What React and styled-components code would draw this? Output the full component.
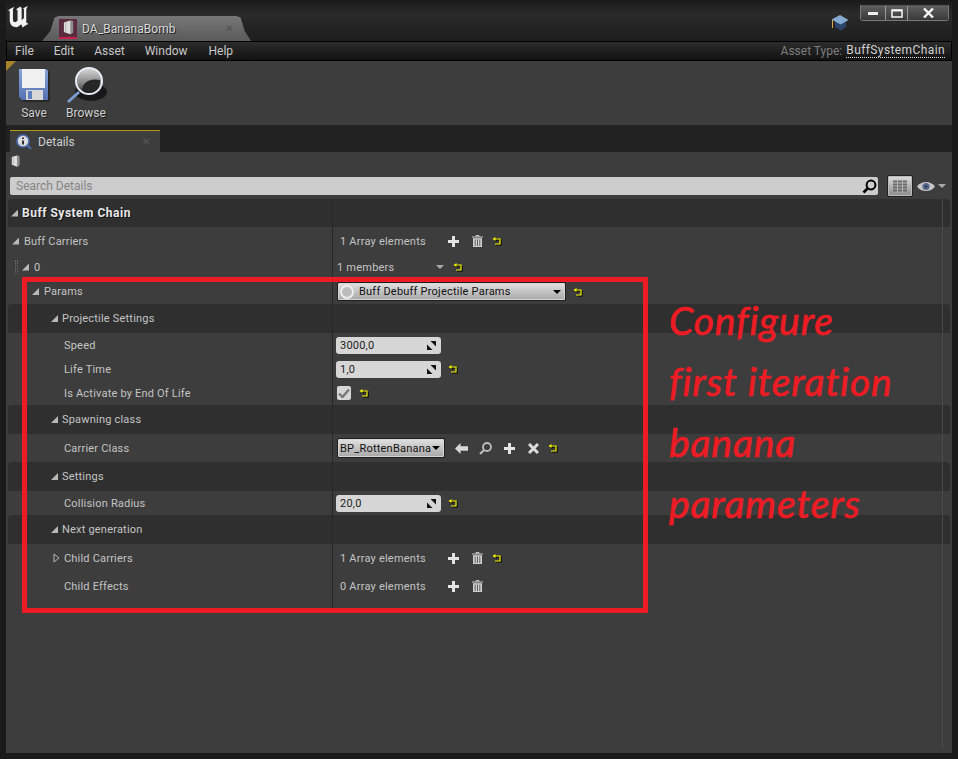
import React from 'react';
import styled, { createGlobalStyle } from 'styled-components';

const GlobalStyle = createGlobalStyle`
  html, body { margin: 0; padding: 0; background: #1a1a1a; }
  * { box-sizing: border-box; }
`;

const Window = styled.div`
  position: relative;
  width: 958px;
  height: 759px;
  overflow: hidden;
  display: flex;
  flex-direction: column;
  padding: 0 6px 6px 6px;
  background: #1a1a1a;
  font-family: Roboto, "Liberation Sans", sans-serif;
  font-size: 11px;
  letter-spacing: 0.22px;
  color: #c4c4c4;
`;

// title bar
const TitleBar = styled.div`
  height: 41px;
  flex: none;
  display: flex;
  align-items: flex-start;
  padding-right: 3px;
  background: linear-gradient(#191919 0, #2b2b2b 14px, #1d1d1d 41px);
`;

const Logo = styled.svg`
  width: 22px;
  height: 22px;
  margin-top: 6px;
  margin-left: 1px;
  flex: none;
`;

const DocTab = styled.div`
  width: 209px;
  height: 25px;
  margin: 16px 0 0 13px;
  padding: 0 18px 0 17px;
  flex: none;
  display: flex;
  align-items: center;
  background: linear-gradient(#777 0, #5a5a5a 100%);
  clip-path: polygon(0 100%, 4% 60%, 6% 6%, 8% 0, 93% 0, 95% 6%, 97% 60%, 100% 100%);
  color: #d8d8d8;
  font-size: 12px;
  letter-spacing: 0.05px;
  text-shadow: 1px 1px 0 #222;
`;

const DocIcon = styled.div`
  width: 18px;
  height: 20px;
  margin-right: 5px;
  display: flex;
  align-items: center;
  justify-content: center;
  background: #5a2b3c;
  border-bottom: 2px solid #c8204a;
`;

const TabClose = styled.span`
  margin-left: auto;
  font-size: 10px;
  text-shadow: none;
  color: ${(p) => p.$color || '#505050'};
`;

const Cap = styled.svg`
  width: 18px;
  height: 17px;
  margin: 14px 11px 0 auto;
  flex: none;
`;

const WinButtons = styled.div`
  display: flex;
  margin-top: 5px;
  flex: none;
  border: 1px solid #777;
  border-top-color: #555;
  border-radius: 0 0 3px 3px;
`;

const WinButton = styled.div`
  width: ${(p) => p.$w}px;
  height: 14px;
  display: flex;
  align-items: center;
  justify-content: center;
  background: linear-gradient(#5e5e5e, #3a3a3a);
  border-right: ${(p) => (p.$last ? 'none' : '1px solid #999')};
`;

// menu
const MenuBar = styled.div`
  height: 20px;
  flex: none;
  display: flex;
  align-items: center;
  padding: 0 6px 0 8px;
  border: 1px solid #000;
  background: linear-gradient(#2c2c2c, #121212);
  font-size: 12px;
  letter-spacing: 0;
  color: #c8c8c8;
`;

const MenuItem = styled.span`
  margin-right: ${(p) => p.$gap}px;
`;

const AssetLabel = styled.span`
  margin-left: auto;
  color: #7d7d7d;
`;

const AssetValue = styled.span`
  margin-left: 4px;
  color: #d0d0d0;
  border-bottom: 1px dotted #ddd;
  line-height: 13px;
  letter-spacing: 0.4px;
`;

// toolbar
const Toolbar = styled.div`
  position: relative;
  height: 64px;
  flex: none;
  display: flex;
  padding: 6px 0 0 11px;
  background: #3d3d3d;
  &::before {
    content: '';
    position: absolute;
    left: 0;
    top: 0;
    width: 10px;
    height: 10px;
    background: #a8842a;
    clip-path: polygon(0 0, 100% 0, 0 100%);
  }
`;

const ToolButton = styled.div`
  width: ${(p) => p.$w}px;
  display: flex;
  flex-direction: column;
  align-items: center;
  font-size: 12px;
  letter-spacing: 0;
  color: #cfcfcf;
  text-shadow: 1px 1px 0 #1c1c1c;
  svg { height: 38px; flex: none; margin-bottom: 1px; }
`;

// details tab
const TabStrip = styled.div`
  height: 27px;
  flex: none;
  display: flex;
  align-items: flex-end;
  padding-left: 4px;
  background: #212121;
`;

const DetailsTab = styled.div`
  width: 150px;
  height: 22px;
  display: flex;
  align-items: center;
  padding: 0 10px 0 6px;
  background: #3d3d3d;
  border-top: 1px solid #b39a12;
  font-size: 12px;
  letter-spacing: 0;
  color: #d0d0d0;
  svg { margin-right: 6px; }
`;

// panel
const Panel = styled.div`
  flex: 1;
  min-height: 0;
  display: flex;
  flex-direction: column;
  background: #3d3d3d;
  padding-bottom: 5px;
`;

const IconRow = styled.div`
  height: 25px;
  flex: none;
  padding: 3px 0 0 5px;
`;

const SearchRow = styled.div`
  height: 18px;
  flex: none;
  display: flex;
  align-items: center;
  padding-left: 4px;
  margin-bottom: 4px;
`;

const SearchBox = styled.div`
  width: 868px;
  height: 18px;
  display: flex;
  align-items: center;
  justify-content: space-between;
  padding: 0 1px 0 6px;
  background: #cdcdcd;
  border-radius: 2px;
  color: #858585;
  font-size: 12px;
  letter-spacing: 0;
`;

const ViewButton = styled.div`
  width: 26px;
  height: 22px;
  margin-left: 9px;
  flex: none;
  display: flex;
  align-items: center;
  justify-content: center;
  background: linear-gradient(#dcdcdc, #8c8c8c);
  border: 1px solid #222;
  border-radius: 2px;
  box-shadow: inset 0 0 0 1px #bbb;
`;

const EyeGroup = styled.div`
  display: flex;
  align-items: center;
  margin-left: 4px;
  gap: 3px;
`;

const List = styled.div`
  position: relative;
  flex: 1;
  min-height: 0;
  margin-left: 2px;
  width: 942px;
  &::after {
    content: '';
    position: absolute;
    left: 934px;
    top: 0;
    bottom: 0;
    width: 1px;
    background: #4a4a4a;
  }
`;

const Row = styled.div`
  height: ${(p) => p.$h}px;
  display: flex;
  background: ${(p) => (p.$dark ? '#2f2f2f' : '#3d3d3d')};
  border-radius: ${(p) => (p.$dark ? '4px 4px 0 0' : '0')};
`;

const NameCell = styled.div`
  width: 324px;
  flex: none;
  display: flex;
  align-items: center;
  padding-left: ${(p) => p.$indent}px;
  font-weight: ${(p) => (p.$bold ? 700 : 400)};
  font-size: ${(p) => (p.$bold ? '12px' : '11px')};
  letter-spacing: ${(p) => (p.$bold ? '0.5px' : '0.2px')};
  color: ${(p) => (p.$bold ? '#e8e8e8' : '#c4c4c4')};
  text-shadow: ${(p) => (p.$bold ? '1px 1px 0 #111' : 'none')};
`;

const ValueCell = styled.div`
  flex: 1;
  display: flex;
  align-items: center;
  padding-left: ${(p) => p.$pad ?? 7}px;
  border-left: 1px solid #272727;
`;

const Caret = styled.span`
  width: 7px;
  height: 7px;
  flex: none;
  margin-right: ${(p) => p.$gap ?? 5}px;
  background: #b8b8b8;
  clip-path: polygon(100% 0, 100% 100%, 0 100%);
`;

const Handle = styled.span`
  width: 3px;
  height: 14px;
  flex: none;
  margin-right: 4px;
  border-left: 1px dotted #6e6e6e;
  border-right: 1px dotted #6e6e6e;
`;

const Count = styled.span`
  width: ${(p) => p.$w}px;
  flex: none;
`;

const Slot = styled.span`
  width: ${(p) => p.$w ?? 24}px;
  flex: none;
  display: flex;
  align-items: center;
  justify-content: center;
`;

const NumberField = styled.div`
  width: 105px;
  height: 17px;
  flex: none;
  display: flex;
  align-items: center;
  justify-content: space-between;
  padding: 0 5px 0 4px;
  background: #d6d6d6;
  border-radius: 3px;
  color: #1c1c1c;
`;

const Check = styled.div`
  width: 14px;
  height: 14px;
  margin-left: 1px;
  flex: none;
  display: flex;
  align-items: center;
  justify-content: center;
  background: #d6d6d6;
  border-radius: 2px;
`;

const Combo = styled.div`
  width: ${(p) => p.$w}px;
  height: ${(p) => p.$h}px;
  margin-right: ${(p) => p.$after ?? 0}px;
  flex: none;
  display: flex;
  align-items: center;
  padding: 0 4px 0 2px;
  background: linear-gradient(#e2e2e2, #a6a6a6);
  border: 1px solid #1d1d1d;
  border-radius: 2px;
  box-shadow: inset 0 0 0 1px #d8d8d8;
  color: #111;
  white-space: nowrap;
`;

const ComboDot = styled.span`
  width: 14px;
  height: 14px;
  margin-right: 5px;
  flex: none;
  border-radius: 50%;
  background: #bcbcbc;
  border: 2px solid #eee;
`;

const ComboArrow = styled.span`
  width: 0;
  height: 0;
  margin-left: auto;
  flex: none;
  border-left: 4px solid transparent;
  border-right: 4px solid transparent;
  border-top: 4px solid #000;
`;

const MemberArrow = styled.span`
  width: 0;
  height: 0;
  flex: none;
  border-left: 4px solid transparent;
  border-right: 4px solid transparent;
  border-top: 4px solid #aaa;
`;

// annotation over the panel
const RedFrame = styled.div`
  position: absolute;
  left: 22px;
  top: 277px;
  width: 626px;
  height: 336px;
  border: 5px solid #ed1c24;
  pointer-events: none;
`;

const Note = styled.div`
  position: absolute;
  left: 669px;
  top: 290px;
  font-family: Lato, "Liberation Sans", sans-serif;
  font-style: italic;
  font-weight: 400;
  font-size: 39px;
  line-height: 61px;
  letter-spacing: 0.9px;
  -webkit-text-stroke: 0.7px #ed1c24;
  color: #ed1c24;
  white-space: nowrap;
`;

// icons
const Reset = () => (
  <svg width="10" height="10" viewBox="0 0 10 10" style={{ filter: 'drop-shadow(1px 1px 0 #000)' }}>
    <path d="M2 3H8V8H3" fill="none" stroke="#f6f600" strokeWidth="1.2" />
    <path d="M3.5 1V5L0.5 3Z" fill="#f6f600" />
  </svg>
);

const Plus = () => (
  <svg width="11" height="11" viewBox="0 0 11 11">
    <path d="M5.5 0V11M0 5.5H11" stroke="#e4e4e4" strokeWidth="3" />
  </svg>
);

const Trash = () => (
  <svg width="11" height="12" viewBox="0 0 11 12">
    <path d="M0 2H11M4 2V0.6H7V2" stroke="#cfcfcf" strokeWidth="1" fill="none" />
    <path d="M1 3.2H10V12H1Z" fill="#cfcfcf" />
    <path d="M3.2 4.5V11M5.5 4.5V11M7.8 4.5V11" stroke="#555" strokeWidth="0.9" />
  </svg>
);

const Back = () => (
  <svg width="13" height="11" viewBox="0 0 13 11">
    <path d="M0 5.5L5.5 0V3.2H13V7.8H5.5V11Z" fill="#d8d8d8" />
  </svg>
);

const Find = () => (
  <svg width="13" height="13" viewBox="0 0 13 13">
    <circle cx="8" cy="5" r="4" fill="none" stroke="#bdbdbd" strokeWidth="1.8" />
    <path d="M5 8L1 12" stroke="#bdbdbd" strokeWidth="2.2" />
  </svg>
);

const Cross = () => (
  <svg width="11" height="11" viewBox="0 0 11 11">
    <path d="M1 1L10 10M10 1L1 10" stroke="#dcdcdc" strokeWidth="3" />
  </svg>
);

const Spin = () => (
  <svg width="9" height="9" viewBox="0 0 9 9">
    <path d="M3.5 0H9V5.5Z M0 3.5L5.5 9H0Z" fill="#111" />
  </svg>
);

const Book = ({ size = 12 }) => (
  <svg width={size} height={size * 1.35} viewBox="0 0 12 16">
    <path d="M1 2.5L8 0.5L11 1.5V13.5L8 15.5L1 13Z" fill="#dedede" />
    <path d="M8 0.5V15.5L11 13.5V1.5Z" fill="#8d8d8d" />
    <path d="M3 3V12.5" stroke="#aaa" strokeWidth="1" />
  </svg>
);

const Collapsed = () => (
  <svg width="7" height="10" viewBox="0 0 7 10" style={{ marginRight: 4, marginLeft: 1 }}>
    <path d="M1 1L6 5L1 9Z" fill="none" stroke="#b8b8b8" strokeWidth="1" />
  </svg>
);

const App = () => (
  <Window>
    <GlobalStyle />

    <TitleBar>
      <Logo viewBox="0 0 24 24">
        <path
          d="M1 5C3 3 5 2 8 1L6.5 3.5V15C6.5 17 8 18 9.5 17.5L11.5 16V5L10 3.5L14.5 0.5L16 2.5V15.5L18.5 13V3.5L17.5 2.5L23 0C21.5 2 21 3.5 21 5.5V18L23.5 19.5C20.5 20.5 18.5 22 17 23.5L15.5 20L11.5 23C7 23.5 3 21 3 15.5V6.5C3 5.5 2.5 5 1 5Z"
          fill="#f2f2f2"
        />
      </Logo>
      <DocTab>
        <DocIcon>
          <Book size={11} />
        </DocIcon>
        DA_BananaBomb
        <TabClose>✕</TabClose>
      </DocTab>
      <Cap viewBox="0 0 18 17">
        <path d="M4 8V13L10 16.5L15 13V8Z" fill="#2c4468" />
        <path d="M0.5 5.5L9 1L17.5 6L9.5 10.5Z" fill="#86aad2" />
        <path d="M1.5 6V14" stroke="#d8a84a" strokeWidth="1" />
      </Cap>
      <WinButtons>
        <WinButton $w={25}>
          <svg width="10" height="4"><rect width="10" height="3" y="1" fill="#eee" /></svg>
        </WinButton>
        <WinButton $w={22}>
          <svg width="12" height="9"><rect x="1" y="1" width="10" height="7" fill="none" stroke="#eee" strokeWidth="1.6" /><rect x="1" y="0.5" width="10" height="2" fill="#eee" /></svg>
        </WinButton>
        <WinButton $w={40} $last>
          <svg width="11" height="10" viewBox="0 0 11 10"><path d="M1 0.5L10 9.5M10 0.5L1 9.5" stroke="#f2f2f2" strokeWidth="2.4" /></svg>
        </WinButton>
      </WinButtons>
    </TitleBar>

    <MenuBar>
      <MenuItem $gap={20}>File</MenuItem>
      <MenuItem $gap={20}>Edit</MenuItem>
      <MenuItem $gap={20}>Asset</MenuItem>
      <MenuItem $gap={21}>Window</MenuItem>
      <MenuItem $gap={0}>Help</MenuItem>
      <AssetLabel>Asset Type:</AssetLabel>
      <AssetValue>BuffSystemChain</AssetValue>
    </MenuBar>

    <Toolbar>
      <ToolButton $w={34}>
        <svg width="32" height="38" viewBox="0 0 32 36">
          <defs>
            <linearGradient id="saveBody" x1="0" y1="0" x2="0" y2="1">
              <stop offset="0" stopColor="#8aa4dc" />
              <stop offset="1" stopColor="#5470b0" />
            </linearGradient>
          </defs>
          <path d="M1 2H30L32 4V33H5L1 30Z" fill="#000" opacity="0.35" transform="translate(1 1)" />
          <path d="M1 1H28L30 3V32H4L1 29Z" fill="url(#saveBody)" />
          <rect x="4" y="1" width="23" height="19" fill="#f0f0f0" />
          <rect x="8" y="22" width="17" height="10" fill="#d8d8d8" />
          <rect x="10" y="23" width="4" height="8" fill="#5f80c0" />
        </svg>
        Save
      </ToolButton>
      <ToolButton $w={70}>
        <svg width="42" height="38" viewBox="0 0 42 38">
          <defs>
            <linearGradient id="lens" x1="0" y1="0" x2="0" y2="1">
              <stop offset="0" stopColor="#d8d8d8" />
              <stop offset="0.55" stopColor="#8a8a8a" />
              <stop offset="1" stopColor="#2b2b2b" />
            </linearGradient>
          </defs>
          <ellipse cx="26" cy="25" rx="16" ry="9" fill="#000" opacity="0.6" />
          <path d="M14 25L3 35" stroke="#7d9bd4" strokeWidth="3" />
          <circle cx="24" cy="14" r="13" fill="url(#lens)" stroke="#e6ecf6" strokeWidth="2" />
          <path d="M17 23C18 15 25 11 35 13C36 20 31 26 24 26C21 26 19 25 17 23Z" fill="#262626" />
        </svg>
        Browse
      </ToolButton>
    </Toolbar>

    <TabStrip>
      <DetailsTab>
        <svg width="16" height="16" viewBox="0 0 16 16">
          <path d="M10 10L15 15" stroke="#4a6cb0" strokeWidth="2" />
          <circle cx="7" cy="7" r="6" fill="#dcdcdc" stroke="#4a6cb0" strokeWidth="1.6" />
          <path d="M7 3.5V5M7 6.5V10.5" stroke="#333" strokeWidth="2" />
        </svg>
        Details
        <TabClose $color="#5a5a5a">✕</TabClose>
      </DetailsTab>
    </TabStrip>

    <Panel>
      <IconRow>
        <Book size={9} />
      </IconRow>
      <SearchRow>
        <SearchBox>
          Search Details
          <svg width="15" height="15" viewBox="0 0 15 15">
            <circle cx="9" cy="6" r="4.4" fill="none" stroke="#000" strokeWidth="2" />
            <path d="M5.5 9.5L1.5 13.5" stroke="#000" strokeWidth="2.6" />
          </svg>
        </SearchBox>
        <ViewButton>
          <svg width="14" height="13" viewBox="0 0 14 13">
            <path d="M0 1.5H14M0 4.5H14M0 7.5H14M0 10.5H14" stroke="#6a6a6a" strokeWidth="2" />
            <path d="M4.5 0V13M9.5 0V13" stroke="#b4b4b4" strokeWidth="1" />
          </svg>
        </ViewButton>
        <EyeGroup>
          <svg width="18" height="11" viewBox="0 0 18 11">
            <path d="M0 5.5C4 -0.5 14 -0.5 18 5.5C14 11.5 4 11.5 0 5.5Z" fill="#c6c6c6" />
            <circle cx="9" cy="5.5" r="3.6" fill="#56678c" />
            <circle cx="9" cy="5.5" r="1.3" fill="#2e3a55" />
          </svg>
          <MemberArrow />
        </EyeGroup>
      </SearchRow>

      <List>
        <Row $h={28} $dark>
          <NameCell $indent={3} $bold><Caret $gap={4} />Buff System Chain</NameCell>
          <ValueCell />
        </Row>

        <Row $h={28}>
          <NameCell $indent={4}><Caret />Buff Carriers</NameCell>
          <ValueCell>
            <Count $w={101}>1 Array elements</Count>
            <Slot><Plus /></Slot>
            <Slot><Trash /></Slot>
            <Slot $w={16}><Reset /></Slot>
          </ValueCell>
        </Row>

        <Row $h={24}>
          <NameCell $indent={7}><Handle /><Caret $gap={5} />0</NameCell>
          <ValueCell $pad={4}>
            <Count $w={99}>1 members</Count>
            <MemberArrow />
            <Slot $w={28}><Reset /></Slot>
          </ValueCell>
        </Row>

        <Row $h={25}>
          <NameCell $indent={24}><Caret />Params</NameCell>
          <ValueCell $pad={4}>
            <Combo $w={229} $h={19}><ComboDot />Buff Debuff Projectile Params<ComboArrow /></Combo>
            <Slot><Reset /></Slot>
          </ValueCell>
        </Row>

        <Row $h={29} $dark>
          <NameCell $indent={43}><Caret $gap={4} />Projectile Settings</NameCell>
          <ValueCell />
        </Row>

        <Row $h={24}>
          <NameCell $indent={56}>Speed</NameCell>
          <ValueCell $pad={3}>
            <NumberField>3000,0<Spin /></NumberField>
          </ValueCell>
        </Row>

        <Row $h={24}>
          <NameCell $indent={56}>Life Time</NameCell>
          <ValueCell $pad={3}>
            <NumberField>1,0<Spin /></NumberField>
            <Slot><Reset /></Slot>
          </ValueCell>
        </Row>

        <Row $h={24}>
          <NameCell $indent={56}>Is Activate by End Of Life</NameCell>
          <ValueCell $pad={3}>
            <Check>
              <svg width="12" height="10" viewBox="0 0 12 10">
                <path d="M1 5.5L4.5 9L11 1.5" fill="none" stroke="#777" strokeWidth="2.4" />
              </svg>
            </Check>
            <Slot $w={26}><Reset /></Slot>
          </ValueCell>
        </Row>

        <Row $h={29} $dark>
          <NameCell $indent={43}><Caret $gap={4} />Spawning class</NameCell>
          <ValueCell />
        </Row>

        <Row $h={28}>
          <NameCell $indent={56}>Carrier Class</NameCell>
          <ValueCell $pad={4}>
            <Combo $w={108} $h={20} $after={4}>BP_RottenBanana<ComboArrow /></Combo>
            <Slot><Back /></Slot>
            <Slot><Find /></Slot>
            <Slot><Plus /></Slot>
            <Slot><Cross /></Slot>
            <Slot $w={16}><Reset /></Slot>
          </ValueCell>
        </Row>

        <Row $h={29} $dark>
          <NameCell $indent={43}><Caret $gap={4} />Settings</NameCell>
          <ValueCell />
        </Row>

        <Row $h={24}>
          <NameCell $indent={56}>Collision Radius</NameCell>
          <ValueCell $pad={3}>
            <NumberField>20,0<Spin /></NumberField>
            <Slot><Reset /></Slot>
          </ValueCell>
        </Row>

        <Row $h={29} $dark>
          <NameCell $indent={43}><Caret $gap={4} />Next generation</NameCell>
          <ValueCell />
        </Row>

        <Row $h={28}>
          <NameCell $indent={44}><Collapsed />Child Carriers</NameCell>
          <ValueCell>
            <Count $w={101}>1 Array elements</Count>
            <Slot><Plus /></Slot>
            <Slot><Trash /></Slot>
            <Slot $w={16}><Reset /></Slot>
          </ValueCell>
        </Row>

        <Row $h={28}>
          <NameCell $indent={56}>Child Effects</NameCell>
          <ValueCell>
            <Count $w={101}>0 Array elements</Count>
            <Slot><Plus /></Slot>
            <Slot><Trash /></Slot>
          </ValueCell>
        </Row>

        <Row $h={10}>
          <NameCell $indent={0} />
          <ValueCell />
        </Row>
      </List>
    </Panel>

    <RedFrame />
    <Note>
      Configure<br />
      first iteration<br />
      banana<br />
      parameters
    </Note>
  </Window>
);

export default App;
